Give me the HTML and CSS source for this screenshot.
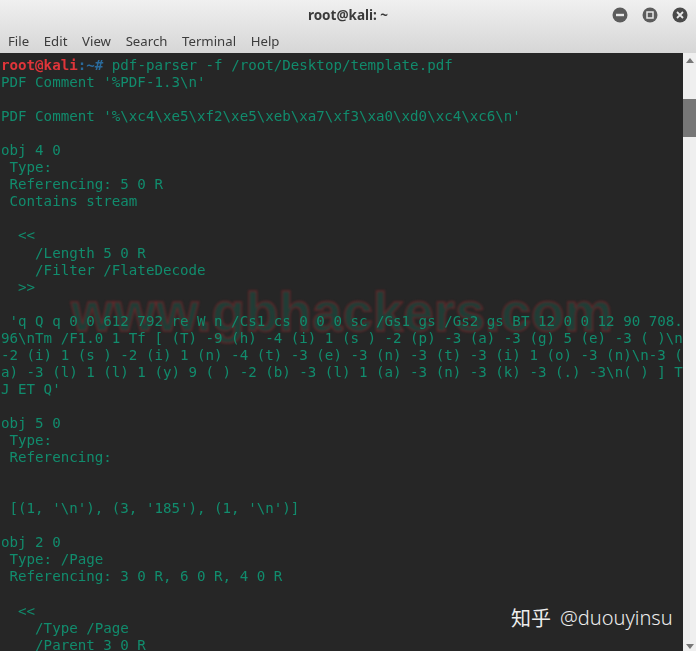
FILE: index.html
```html
<!DOCTYPE html>
<html lang="en">
<head>
<meta charset="utf-8">
<title>root@kali: ~</title>
<link rel="stylesheet" href="styles.css">
</head>
<body>
<div class="window">
  <header class="chrome">
    <div class="titlebar">
      <span class="title">root@kali: ~</span>
      <div class="controls">
        <svg class="ctl" viewBox="0 0 16 16"><circle cx="8" cy="8" r="7.5" fill="#5c5c5c"/><rect x="4" y="6.8" width="8" height="2.4" fill="#e8e8e8"/></svg>
        <svg class="ctl" viewBox="0 0 16 16"><circle cx="8" cy="8" r="7.5" fill="#5c5c5c"/><rect x="5" y="5" width="6" height="6" fill="none" stroke="#e8e8e8" stroke-width="1.5"/></svg>
        <svg class="ctl" viewBox="0 0 16 16"><circle cx="8" cy="8" r="7.5" fill="#4a4a4a"/><path d="M5 5l6 6M11 5l-6 6" stroke="#e8e8e8" stroke-width="1.8"/></svg>
      </div>
    </div>
    <nav class="menubar">
      <span>File</span><span>Edit</span><span>View</span><span>Search</span><span>Terminal</span><span>Help</span>
    </nav>
  </header>
  <main class="body">
    <div class="terminal">
      <div class="stamp">www.gbhackers.com</div>
<pre class="output"><span class="prompt-user">root@kali</span><span class="prompt-sep">:~#</span> pdf-parser -f /root/Desktop/template.pdf
PDF Comment '%PDF-1.3\n'

PDF Comment '%\xc4\xe5\xf2\xe5\xeb\xa7\xf3\xa0\xd0\xc4\xc6\n'

obj 4 0
 Type:
 Referencing: 5 0 R
 Contains stream

  &lt;&lt;
    /Length 5 0 R
    /Filter /FlateDecode
  &gt;&gt;

 'q Q q 0 0 612 792 re W n /Cs1 cs 0 0 0 sc /Gs1 gs /Gs2 gs BT 12 0 0 12 90 708.
96\nTm /F1.0 1 Tf [ (T) -9 (h) -4 (i) 1 (s ) -2 (p) -3 (a) -3 (g) 5 (e) -3 ( )\n
-2 (i) 1 (s ) -2 (i) 1 (n) -4 (t) -3 (e) -3 (n) -3 (t) -3 (i) 1 (o) -3 (n)\n-3 (
a) -3 (l) 1 (l) 1 (y) 9 ( ) -2 (b) -3 (l) 1 (a) -3 (n) -3 (k) -3 (.) -3\n( ) ] T
J ET Q'

obj 5 0
 Type:
 Referencing:


 [(1, '\n'), (3, '185'), (1, '\n')]

obj 2 0
 Type: /Page
 Referencing: 3 0 R, 6 0 R, 4 0 R

  &lt;&lt;
    /Type /Page
    /Parent 3 0 R</pre>
      <div class="credit"><span class="credit-cjk">知乎</span><span class="credit-name">@duouyinsu</span></div>
    </div>
    <aside class="scrollbar">
      <svg class="arrow" viewBox="0 0 10 6"><path d="M5 0l5 6H0z" fill="#777"/></svg>
      <div class="track"><div class="thumb"></div></div>
      <svg class="arrow" viewBox="0 0 10 6"><path d="M5 6l5-6H0z" fill="#777"/></svg>
    </aside>
  </main>
</div>
</body>
</html>
```
FILE: styles.css
```css
* { box-sizing: border-box; }
html, body { margin: 0; padding: 0; height: 100%; overflow: hidden; }
.window { width: 696px; height: 651px; display: flex; flex-direction: column; background: #262626; }
.chrome {
  height: 53px;
  flex: none;
  background: linear-gradient(#f0f0f0, #d6d6d6);
  font-family: "Noto Sans", "Liberation Sans", sans-serif;
  color: #333;
}
.titlebar { height: 30px; position: relative; display: flex; align-items: center; justify-content: center; }
.title { font-size: 13.5px; font-weight: 700; color: #3a3a3a; filter: blur(.4px); }
.controls { position: absolute; right: 8px; top: 7px; display: flex; gap: 14px; }
.ctl { width: 16px; height: 16px; display: block; }
.menubar { display: flex; gap: 14.7px; padding: 2px 0 0 8px; font-size: 13.2px; color: #3c3c3c; filter: blur(.4px); }
.body { flex: 1; min-height: 0; display: flex; }
.terminal { position: relative; width: 683px; flex: none; overflow: hidden; background: #262626; }
.output {
  position: relative;
  margin: 0;
  padding: 4px 0 0 1px;
  font-family: "DejaVu Sans Mono", monospace;
  font-size: 14.17px;
  line-height: 17.05px;
  color: #118c6d;
  white-space: pre;
  filter: blur(.45px);
}
.prompt-user { color: #e0353a; font-weight: 700; }
.prompt-sep { color: #2a6a9c; font-weight: 700; }
.stamp {
  position: absolute;
  left: 71px;
  top: 229px;
  font-family: "Liberation Sans", sans-serif;
  font-weight: 700;
  font-size: 54.7px;
  line-height: 60px;
  color: rgba(24, 92, 76, .42);
  -webkit-text-stroke: 1.4px rgba(140, 32, 38, .62);
  white-space: nowrap;
  filter: blur(.8px);
}
.credit {
  position: absolute;
  left: 511px;
  top: 551px;
  display: flex;
  gap: 9px;
  font-size: 20px;
  line-height: 28px;
  color: #ededed;
  white-space: nowrap;
}
.credit-cjk { font-family: "Noto Sans CJK SC", sans-serif; font-weight: 400; }
.credit-name { font-family: "Noto Sans", sans-serif; font-weight: 300; }
.scrollbar { flex: 1; background: #efefef; display: flex; flex-direction: column; align-items: center; padding: 5px 0 2px; }
.arrow { width: 8px; height: 5px; flex: none; }
.track { flex: 1; width: 100%; padding-top: 36px; }
.thumb { height: 38px; background: #777; }
```
